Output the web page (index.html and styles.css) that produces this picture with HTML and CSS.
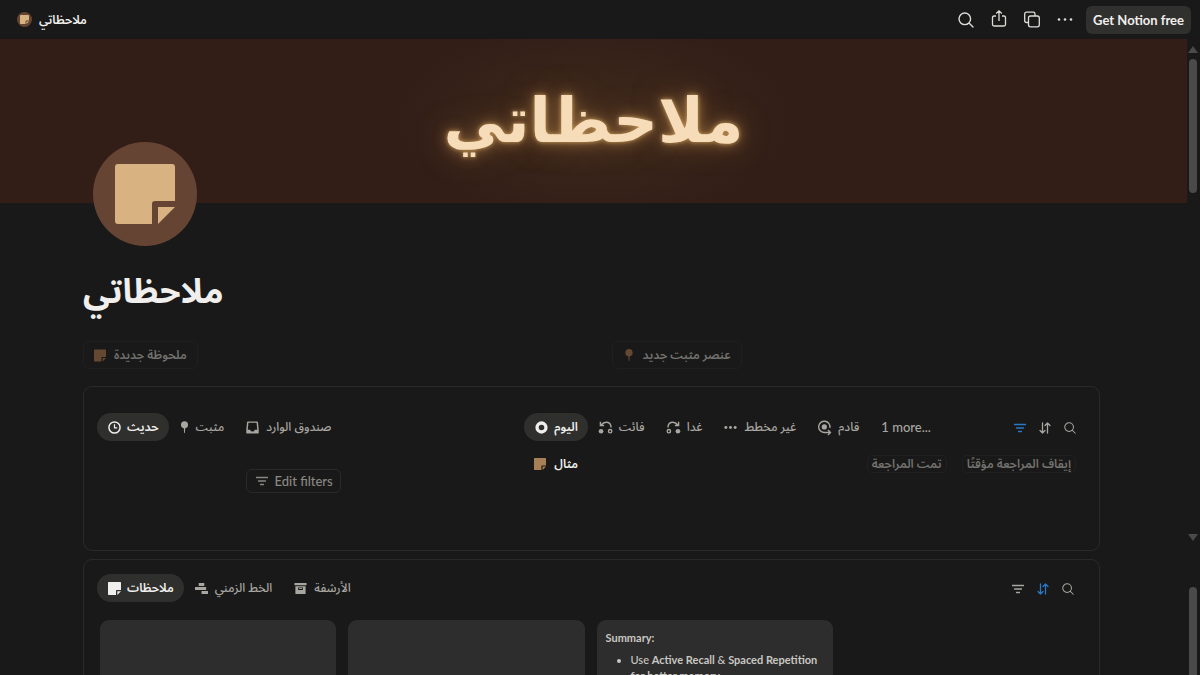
FILE: index.html
```html
<!DOCTYPE html>
<html lang="ar">
<head>
    <meta charset="UTF-8">
    <meta name="viewport" content="width=device-width, initial-scale=1.0">
    <title>ملاحظاتي</title>
    <link rel="stylesheet" href="styles.css">
</head>
<body>
    <!-- Shared icons -->
    <svg class="sprite" aria-hidden="true">
        <symbol id="note" viewBox="0 0 60 60">
            <path d="M3 0h54q3 0 3 3v34H40q-3 0-3 3v20H3q-3 0-3-3V3q0-3 3-3zM43 43h17L43 60z"/>
        </symbol>
        <symbol id="pin" viewBox="2 0 10 14">
            <path d="M7 0a4 4 0 0 1 .8 7.9L7.4 13h-.8l-.4-5.1A4 4 0 0 1 7 0z"/>
        </symbol>
        <symbol id="search" viewBox="0 0 16 16">
            <path d="M6.8 1a5.8 5.8 0 1 1 0 11.6 5.8 5.8 0 0 1 0-11.6zM11 11l4 4" fill="none" stroke="currentColor" stroke-width="1.4" stroke-linecap="round"/>
        </symbol>
        <symbol id="filter" viewBox="0 0 12 12">
            <path d="M.5 2.5h11M2.5 6h7M4.5 9.5h3" fill="none" stroke="currentColor" stroke-width="1.3" stroke-linecap="round"/>
        </symbol>
        <symbol id="sort" viewBox="0 0 12 12">
            <path d="M3.5 1v10M1 8.5L3.5 11 6 8.5M8.5 11V1M6 3.5L8.5 1 11 3.5" fill="none" stroke="currentColor" stroke-width="1.3" stroke-linecap="round" stroke-linejoin="round"/>
        </symbol>
    </svg>

    <header class="topbar">
        <a class="crumb" href="#">
            <span class="crumb-icon"><svg><use href="#note"/></svg></span>
            <span>ملاحظاتي</span>
        </a>
        <div class="actions">
            <button class="icon-btn" aria-label="Search"><svg><use href="#search"/></svg></button>
            <button class="icon-btn" aria-label="Share">
                <svg class="line" viewBox="0 0 16 16" stroke-width="1.3"><path d="M5 4H3Q1.500 4 1.500 5.500v7Q1.500 14 3 14h10q1.500 0 1.500-1.500v-7Q14.500 4 13 4h-2M8 9V-1M5.200 1.500L8-1.200l2.800 2.700"/></svg>
            </button>
            <button class="icon-btn" aria-label="Duplicate">
                <svg class="line" viewBox="0 0 16 16" stroke-width="1.3"><rect x="4.500" y="4" width="10.800" height="10.800" rx="2"/><path d="M4.500 10.500H2.500Q.7 10.500.7 8.700V2Q.7.200 2.500.200h6.700Q11 .200 11 2v2"/></svg>
            </button>
            <button class="icon-btn" aria-label="More">
                <svg viewBox="0 0 16 16"><circle cx="2" cy="7.500" r="1.300"/><circle cx="8" cy="7.500" r="1.300"/><circle cx="14" cy="7.500" r="1.300"/></svg>
            </button>
            <button class="cta">Get Notion free</button>
        </div>
    </header>

    <div class="frame">
        <main class="page">
            <div class="cover"><span>ملاحظاتي</span></div>
            <div class="content">
                <div class="page-icon"><svg><use href="#note"/></svg></div>
                <h1>ملاحظاتي</h1>

                <div class="new-row">
                    <div><button class="new-btn"><svg><use href="#note"/></svg>ملحوظة جديدة</button></div>
                    <div><button class="new-btn"><svg><use href="#pin"/></svg>عنصر مثبت جديد</button></div>
                </div>

                <section class="panel split">
                    <div>
                        <nav class="tabs">
                            <button class="tab active">
                                <svg class="line" viewBox="0 0 14 14" stroke-width="1.600"><circle cx="7" cy="7" r="6"/><path d="M7 3.500V7.500h3" stroke-width="1.300"/></svg>حديث
                            </button>
                            <button class="tab"><svg class="narrow"><use href="#pin"/></svg>مثبت</button>
                            <button class="tab">
                                <svg viewBox="0 0 14 14"><path fill-rule="evenodd" d="M2 .5h10q.8 0 .9.800l.8 8V13q0 .5-.5.500H.8q-.5 0-.5-.5V9.300l.8-8Q1.200.500 2 .500zM2.600 2l-.7 7.300h2.600q.3 2 2.500 2t2.500-2h2.600L11.400 2z"/></svg>صندوق الوارد
                            </button>
                        </nav>
                        <div class="empty">
                            <button class="edit-filters"><svg><use href="#filter"/></svg>Edit filters</button>
                        </div>
                    </div>
                    <div>
                        <nav class="tabs">
                            <button class="tab active">
                                <svg class="line" viewBox="0 0 14 14" stroke-width="3.600"><circle cx="7" cy="7" r="4.800"/></svg>اليوم
                            </button>
                            <button class="tab">
                                <svg class="line" viewBox="0 0 14 14" stroke-width="1.500"><path d="M1.500.800v4h4M2 4.500Q5 1 8.500 1.400 12.800 2 13 7"/><circle class="dot" cx="2.200" cy="11" r="2.500"/><circle cx="12" cy="11" r="1.800"/></svg>فائت
                            </button>
                            <button class="tab">
                                <svg class="line" viewBox="0 0 14 14" stroke-width="1.500"><path d="M12.500.800v4h-4M12 4.500Q9 1 5.500 1.400 1.200 2 1 7"/><circle class="dot" cx="11.800" cy="11" r="2.500"/><circle cx="2" cy="11" r="1.800"/></svg>غدا
                            </button>
                            <button class="tab">
                                <svg viewBox="0 0 14 14"><circle cx="2" cy="7" r="1.600"/><circle cx="7" cy="7" r="1.600"/><circle cx="12" cy="7" r="1.600"/></svg>غير مخطط
                            </button>
                            <button class="tab">
                                <svg class="line" viewBox="0 0 14 14" stroke-width="1.500"><circle class="dot" cx="6.800" cy="6.400" r="2.800"/><path d="M12.800 7.500A6.100 6.100 0 1 0 6.500 12.400H13M10.800 9.700l2.600 2.700-2.600 2.600"/></svg>قادم
                            </button>
                            <button class="tab more">1 more...</button>
                            <span class="tools">
                                <button class="tool on" aria-label="Filter"><svg><use href="#filter"/></svg></button>
                                <button class="tool" aria-label="Sort"><svg><use href="#sort"/></svg></button>
                                <button class="tool" aria-label="Search"><svg><use href="#search"/></svg></button>
                            </span>
                        </nav>
                        <div class="list-item">
                            <a href="#"><svg><use href="#note"/></svg>مثال</a>
                            <button class="chip">تمت المراجعة</button>
                            <button class="chip">إيقاف المراجعة مؤقتًا</button>
                        </div>
                    </div>
                </section>

                <section class="panel">
                    <nav class="tabs">
                        <button class="tab active"><svg><use href="#note"/></svg>ملاحظات</button>
                        <button class="tab">
                            <svg viewBox="0 0 14 14"><path d="M4 1h6v3.200H4zM0 5.400h12v3.200H0zM7 9.800h7V13H7z"/></svg>الخط الزمني
                        </button>
                        <button class="tab">
                            <svg viewBox="0 0 14 14"><path fill-rule="evenodd" d="M.5 1h13v2.500H.5zM1.500 4.500h11V13h-11zM4.500 6v2.500h5V6z"/><path d="M5.500 6.500h3v1h-3z"/></svg>الأرشفة
                        </button>
                        <span class="tools">
                            <button class="tool" aria-label="Filter"><svg><use href="#filter"/></svg></button>
                            <button class="tool on" aria-label="Sort"><svg><use href="#sort"/></svg></button>
                            <button class="tool" aria-label="Search"><svg><use href="#search"/></svg></button>
                        </span>
                    </nav>
                    <div class="gallery">
                        <article class="card"></article>
                        <article class="card"></article>
                        <article class="card">
                            <b>Summary:</b>
                            <ul>
                                <li>Use <b>Active Recall</b> &amp; <b>Spaced Repetition for better memory.</b></li>
                            </ul>
                        </article>
                    </div>
                </section>
            </div>
        </main>
        <div class="scroll" aria-hidden="true">
            <i class="arrow up"></i>
            <i class="thumb"></i>
            <i class="arrow down"></i>
            <i class="thumb rest"></i>
        </div>
    </div>
</body>
</html>
```
FILE: styles.css
```css
* {
    box-sizing: border-box;
}
body {
    margin: 0;
    height: 100vh;
    overflow: hidden;
    display: flex;
    flex-direction: column;
    background: #191919;
    color: #f0efed;
    font-family: "Open Sans", "Noto Sans Arabic", "Noto Sans", "DejaVu Sans", sans-serif;
    font-size: 12px;
    font-weight: 500;
    line-height: 20px;
}
button {
    font: inherit;
    color: inherit;
    background: none;
    border: 0;
    padding: 0;
    white-space: nowrap;
    cursor: pointer;
}
a {
    color: inherit;
    text-decoration: none;
}
svg {
    fill: currentColor;
    flex: none;
    overflow: visible;
}
svg.line {
    fill: none;
    stroke: currentColor;
}
.dot {
    fill: currentColor;
    stroke: none;
}
.sprite {
    display: none;
}

/* Top bar */
.topbar {
    flex: none;
    height: 39px;
    padding: 0 9px 0 17px;
    display: flex;
    align-items: center;
    justify-content: space-between;
}
.crumb {
    display: flex;
    align-items: center;
    gap: 7px;
    font-weight: 600;
}
.crumb-icon {
    width: 15px;
    height: 15px;
    border-radius: 50%;
    background: #654433;
    color: #d8b281;
    display: grid;
    place-items: center;
}
.crumb-icon svg {
    width: 9px;
    height: 9px;
}
.actions {
    display: flex;
    align-items: center;
    gap: 17px;
}
.icon-btn {
    color: #dedcd8;
}
.icon-btn svg {
    display: block;
    width: 16px;
    height: 16px;
}
.cta,
.edit-filters,
.tab.more {
    font-family: Lato, sans-serif;
    font-size: 13px;
}
.cta {
    height: 28px;
    padding: 0 7px;
    margin-left: -4px;
    border-radius: 6px;
    background: #30302e;
    font-weight: 700;
}

/* Page */
.frame {
    flex: 1;
    min-height: 0;
    display: flex;
}
.page {
    flex: 1;
    min-width: 0;
    overflow: hidden;
}
.cover {
    height: 164px;
    display: flex;
    align-items: center;
    justify-content: center;
    background: radial-gradient(ellipse 200px 100px at center, #3f2a1c, #321e17);
}
.cover span {
    color: #f6dcb8;
    font: bold 62px/100px "DejaVu Sans", sans-serif;
    text-shadow: 0 0 4px #c79a5c, 0 0 14px #9c7040, 0 0 30px #6b4a2a;
}
.content {
    padding: 0 87px 0 83px;
}
.page-icon {
    position: relative;
    width: 104px;
    height: 104px;
    margin: -61px 0 0 10px;
    border-radius: 50%;
    background: #654433;
    color: #d8b281;
    display: grid;
    place-items: center;
}
.page-icon svg {
    width: 60px;
    height: 60px;
}
h1 {
    margin: 20px 0 27px;
    font-size: 34px;
    line-height: 48px;
    font-weight: 700;
}
.new-row {
    display: grid;
    grid-template-columns: 1fr 1fr;
    gap: 40px;
    margin-bottom: 17px;
}
.new-btn {
    display: flex;
    align-items: center;
    gap: 8px;
    height: 28px;
    padding: 0 10px;
    border: 1px solid #1f1f1f;
    border-radius: 6px;
    color: #73726e;
    font-weight: 600;
}
.new-btn svg {
    width: 12px;
    height: 13px;
    color: #654832;
}

/* Panels */
.panel {
    border: 1px solid #2a2a2a;
    border-radius: 9px;
    padding: 14px 15px 14px 13px;
    margin-bottom: 8px;
}
.split {
    display: grid;
    grid-template-columns: 7fr 10fr;
    gap: 34px;
    min-height: 165px;
    padding: 26px 13px 14px;
}
.tabs {
    display: flex;
    align-items: center;
}
.tab {
    display: flex;
    align-items: center;
    gap: 7px;
    height: 28px;
    padding: 0 11px;
    border-radius: 14px;
    color: #a8a6a0;
}
.tab.active {
    gap: 6px;
    padding-right: 10px;
    background: #2f2f2d;
    color: #f0efed;
    font-weight: 600;
}
.tab svg {
    width: 13px;
    height: 13px;
}
.tab .narrow {
    width: 9px;
}
.tools {
    display: flex;
    gap: 13px;
    margin-left: auto;
    padding: 2px 10px 0 0;
}
.tool {
    color: #a8a6a0;
}
.tool.on {
    color: #2b78c5;
}
.tool svg {
    display: block;
    width: 12px;
    height: 12px;
}
.empty {
    display: flex;
    justify-content: center;
    padding-top: 28px;
}
.edit-filters {
    display: flex;
    align-items: center;
    gap: 6px;
    height: 24px;
    padding: 0 7px 0 9px;
    border: 1px solid #2a2a2a;
    border-radius: 6px;
    color: #8a8884;
}
.edit-filters svg {
    width: 12px;
    height: 12px;
}
.list-item {
    display: flex;
    align-items: center;
    gap: 15px;
    padding: 13px 10px 0;
}
.list-item a {
    display: flex;
    align-items: center;
    gap: 8px;
    margin-right: auto;
    font-weight: 600;
}
.list-item svg {
    width: 12px;
    height: 12px;
    color: #a77f56;
}
.chip {
    height: 18px;
    padding: 0 4px;
    border: 1px solid #202020;
    border-radius: 5px;
    color: #73726e;
    font-weight: 600;
    line-height: 16px;
}

/* Gallery */
.gallery {
    display: grid;
    grid-template-columns: repeat(4, 1fr);
    gap: 12px;
    padding: 18px 3px 0;
}
.card {
    height: 180px;
    padding: 9px;
    border-radius: 9px;
    background: #2d2d2d;
    color: #c9c7c2;
    font-family: Lato, sans-serif;
    font-size: 11px;
    line-height: 18px;
}
.card b {
    font-weight: 700;
}
.card ul {
    margin: 5px 0 0;
    padding-left: 25px;
}
.card li {
    line-height: 16px;
}

/* Scroll track */
.scroll {
    flex: none;
    width: 13px;
    display: flex;
    flex-direction: column;
    align-items: center;
    padding: 7px 1px 0 0;
}
.arrow {
    border: 5px solid transparent;
    border-top-width: 0;
    border-bottom: 7px solid #4a4a4a;
}
.arrow.down {
    margin-top: auto;
    transform: rotate(180deg);
}
.thumb {
    width: 8px;
    height: 134px;
    margin-top: 6px;
    border-radius: 4px;
    background: #4a4a4a;
}
.thumb.rest {
    height: 88px;
    margin-top: 46px;
    border-radius: 4px 4px 0 0;
}
```
